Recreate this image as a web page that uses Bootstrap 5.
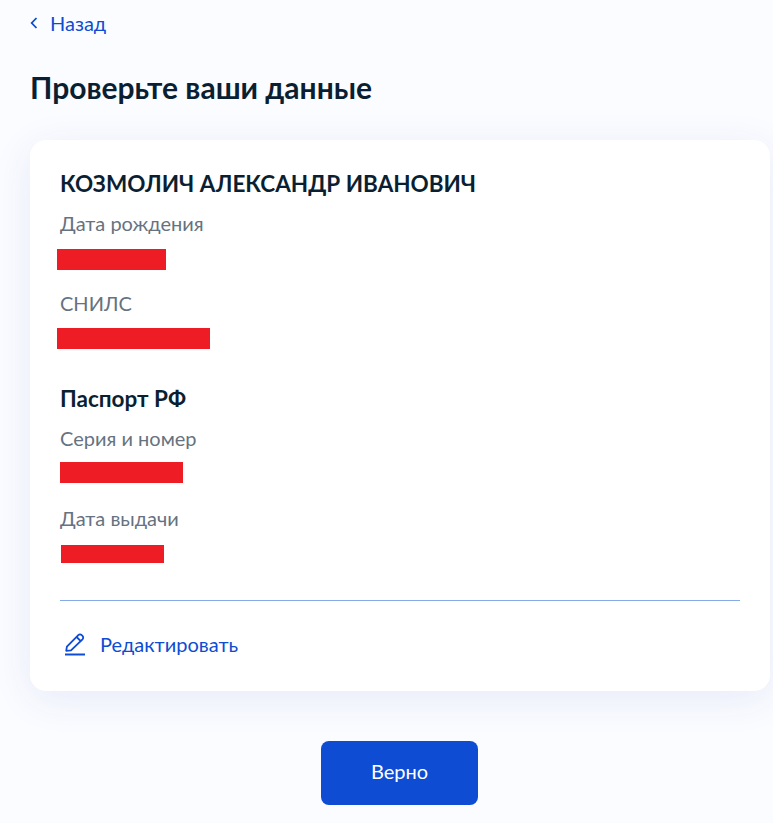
<!DOCTYPE html>
<html lang="ru">
<head>
<meta charset="utf-8">
<title>Проверьте ваши данные</title>
<link href="https://cdn.jsdelivr.net/npm/bootstrap@5.3.0/dist/css/bootstrap.min.css" rel="stylesheet">
<style>
html,body{height:100%}
body{font-family:Lato,"Liberation Sans",sans-serif;background:#fbfcff;color:#0b1f33;overflow:hidden;font-size:20px;line-height:24px}
.page-wrap{padding:9px 3px 0 30px;height:823px}
.back-link,.edit-link{color:#0d4cd3;text-decoration:none}
.back-link{gap:12px;height:24px}
.page-title{font-size:30px;line-height:36px;font-weight:700;margin:34px 0 35px;color:#0b1f33}
.data-card{background:#fff;border-radius:16px;box-shadow:0 8px 40px rgba(24,60,180,.09);padding:29px 30px 30px;height:551px}
.person-name{font-size:22.500px;line-height:30px;font-weight:700;margin:0 0 12px}
.field-label{color:#66727f;line-height:24px}
.redact{background:#ee1c25;display:block}
.r1{width:109px;height:21px;margin:14px 0 21px -3px}
.r2{width:153px;height:21px;margin:13px 0 0 -3px}
.r3{width:123px;height:21px;margin:12px 0 23px 0}
.r4{width:103px;height:18px;margin:15px 0 0 1px}
.passport-title{font-size:22.500px;line-height:28px;font-weight:700;margin:36px 0 13px}
.divider-line{height:1px;background:#86a9e8;margin-top:37px}
.edit-link{gap:15px;margin-top:31px;height:24px;margin-left:3px}
.confirm-btn{width:157px;height:64px;background:#0d4cd3;border:0;border-radius:8px;color:#fff;font-size:20px;font-family:Lato,"Liberation Sans",sans-serif;padding-bottom:10px}
.confirm-btn:hover{background:#0d4cd3;color:#fff}
.btn-row{margin-top:50px;padding-left:291px}
</style>
</head>
<body>
<div class="page-wrap">
  <a href="#" class="back-link d-inline-flex align-items-center">
    <svg width="8" height="12" viewBox="0 0 8 12" fill="none" aria-hidden="true"><path d="M6.500 1 1.700 6l4.800 5" stroke="#0d4cd3" stroke-width="1.800"/></svg>
    <span>Назад</span>
  </a>
  <h1 class="page-title">Проверьте ваши данные</h1>
  <div class="data-card">
    <h2 class="person-name">КОЗМОЛИЧ АЛЕКСАНДР ИВАНОВИЧ</h2>
    <div class="field-label">Дата рождения</div>
    <span class="redact r1"></span>
    <div class="field-label">СНИЛС</div>
    <span class="redact r2"></span>
    <h3 class="passport-title">Паспорт РФ</h3>
    <div class="field-label">Серия и номер</div>
    <span class="redact r3"></span>
    <div class="field-label">Дата выдачи</div>
    <span class="redact r4"></span>
    <div class="divider-line"></div>
    <a href="#" class="edit-link d-flex align-items-center">
      <svg width="22" height="24" viewBox="0 0 22 24" fill="none" aria-hidden="true"><path d="M3.200 18.800 3.900 14.700 15.300 3.100a2.400 2.400 0 0 1 3.400 0l.8.800a2.400 2.400 0 0 1 0 3.400L8 18.400 3.200 18.800Z" stroke="#0d4cd3" stroke-width="1.800" stroke-linejoin="round"/><path d="M13.600 5l4.200 4.200" stroke="#0d4cd3" stroke-width="1.800"/><path d="M2 22.500h20" stroke="#0d4cd3" stroke-width="2"/></svg>
      <span>Редактировать</span>
    </a>
  </div>
  <div class="btn-row"><button type="button" class="btn confirm-btn">Верно</button></div>
</div>
<script src="https://cdn.jsdelivr.net/npm/bootstrap@5.3.0/dist/js/bootstrap.bundle.min.js"></script>
</body>
</html>
